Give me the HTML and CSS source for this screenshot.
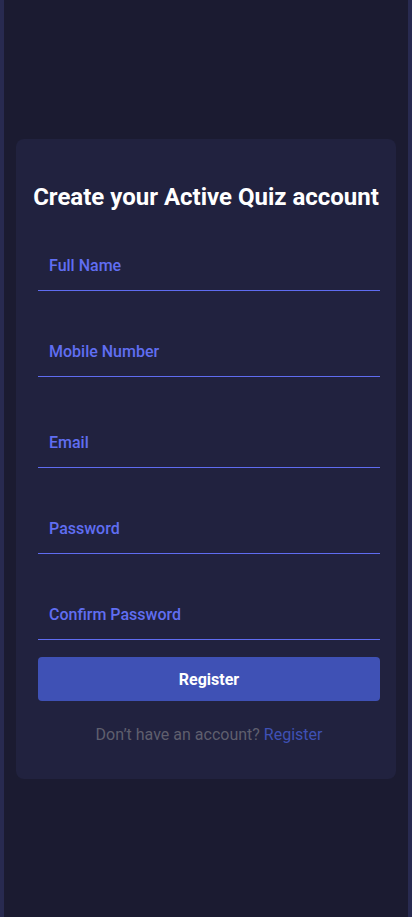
FILE: index.html
```html
<!DOCTYPE html>
<html lang="en">
<head>
<meta charset="utf-8">
<meta name="viewport" content="width=device-width, initial-scale=1">
<title>Register - Active Quiz</title>
<link rel="stylesheet" href="styles.css">
</head>
<body>
<div class="page">
  <div class="card">
    <h1 class="title">Create your Active Quiz account</h1>
    <div class="field field-first"><label class="label">Full Name</label></div>
    <div class="field"><label class="label">Mobile Number</label></div>
    <div class="field field-email"><label class="label">Email</label></div>
    <div class="field"><label class="label">Password</label></div>
    <div class="field"><label class="label">Confirm Password</label></div>
    <button class="btn" type="button">Register</button>
    <p class="footer">Don’t have an account? <a class="link" href="#">Register</a></p>
  </div>
</div>
</body>
</html>
```

FILE: styles.css
```css
* { box-sizing: border-box; }
html, body { margin: 0; padding: 0; }
body {
  background: #1b1b31;
  font-family: Roboto, "Liberation Sans", Arial, sans-serif;
}
.page {
  min-height: 917px;
  border-left: 4px solid #282a50;
  border-right: 4px solid #282a50;
  padding: 139px 12px 0;
}
.card {
  background: #21223f;
  border-radius: 8px;
  padding: 44px 16px 34px 22px;
  display: flex;
  flex-direction: column;
}
.title {
  margin: 0 -16px 0 -22px;
  color: #ffffff;
  font-size: 24px;
  line-height: 28px;
  font-weight: 700;
  text-align: center;
  white-space: nowrap;
}
.field {
  height: 86px;
  border-bottom: 1px solid #5f6cf0;
  display: flex;
  align-items: flex-end;
  padding: 0 11px 15px;
}
.field-first { height: 80px; }
.field-email { height: 91px; }
.label {
  color: #606ef2;
  font-size: 16px;
  line-height: 19px;
  font-weight: 500;
}
.btn {
  margin-top: 17px;
  height: 44px;
  border: 0;
  border-radius: 4px;
  background: #3f51b5;
  color: #ffffff;
  font-family: inherit;
  font-size: 16px;
  font-weight: 700;
}
.footer {
  margin: 24px 0 0;
  text-align: center;
  color: #5f5f6e;
  font-size: 16px;
  line-height: 20px;
}
.link {
  color: #3f51b5;
  text-decoration: none;
}
```
